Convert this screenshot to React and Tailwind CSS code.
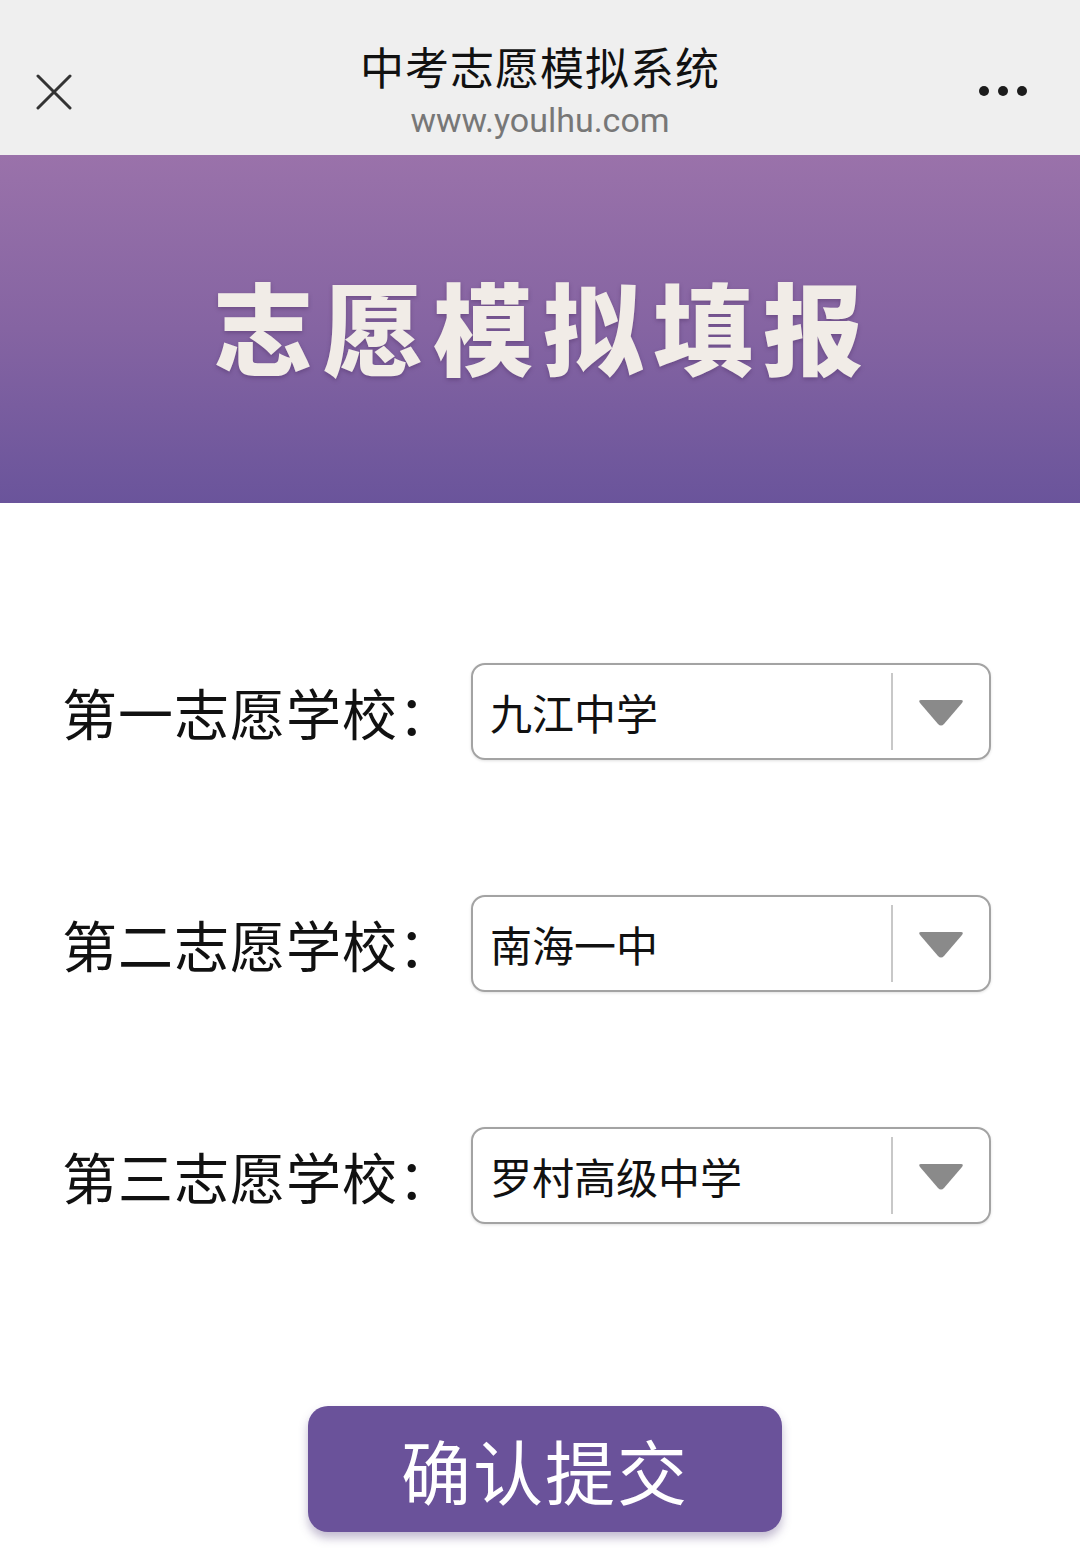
import React, { useState } from 'react';

const schools = ['九江中学', '南海一中', '罗村高级中学', '桂城中学', '石门中学', '西樵高级中学'];
const ranks = ['一', '二', '三'];

export default function App() {
    const [picks, setPicks] = useState(['九江中学', '南海一中', '罗村高级中学']);

    return (
        <div className="w-[1080px] min-h-[1561px] bg-white font-['Noto_Sans_CJK_SC',sans-serif]">
            {/* Nav bar */}
            <header className="h-[155px] bg-[#efefef] grid grid-cols-[1fr_auto_1fr] items-center">
                <div className="pl-9 pt-[28px]">
                    <svg viewBox="0 0 36 36" className="w-9 h-9" fill="none" stroke="#333" strokeWidth="3" strokeLinecap="round">
                        <path d="M2 2 L34 34 M34 2 L2 34" />
                    </svg>
                </div>
                <div className="flex flex-col items-center pt-[22px]">
                    <h1 className="text-[44px] leading-[56px] text-[#111] tracking-[1px]">中考志愿模拟系统</h1>
                    <p className="text-[34px] leading-[40px] text-[#777] font-['Roboto',sans-serif] mt-[6px]">www.youlhu.com</p>
                </div>
                <div className="flex gap-[9px] justify-end pr-[53px] pt-[27px]">
                    <span className="w-[10px] h-[10px] rounded-full bg-[#1c1c1c]" />
                    <span className="w-[10px] h-[10px] rounded-full bg-[#1c1c1c]" />
                    <span className="w-[10px] h-[10px] rounded-full bg-[#1c1c1c]" />
                </div>
            </header>

            {/* Banner */}
            <div className="h-[348px] bg-gradient-to-b from-[#9a72aa] via-[#8564a2] to-[#6a549b] flex items-center justify-center">
                <h2 className="text-[100px] font-black text-[#f1ece7] tracking-[10px] pl-[6px] pb-[8px] leading-none drop-shadow-[0_2px_2px_rgba(60,30,80,0.35)]">
                    志愿模拟填报
                </h2>
            </div>

            {/* Form */}
            <main className="pt-[160px] pl-[62px] flex flex-col gap-[135px]">
                {ranks.map((r, i) => (
                    <div key={r} className="flex items-center h-[97px]">
                        <label className="w-[409px] text-[55px] text-[#111] leading-none tracking-[1px]">
                            第{r}志愿学校：
                        </label>
                        <div className="relative w-[520px] h-[97px] border-2 border-[#a3a3a3] rounded-[14px] bg-white flex items-center shadow-[0_1px_3px_rgba(0,0,0,0.12)]">
                            <select
                                value={picks[i]}
                                onChange={e => {
                                    const next = [...picks];
                                    next[i] = e.target.value;
                                    setPicks(next);
                                }}
                                className="appearance-none w-full h-full bg-transparent pl-[17px] pr-[110px] text-[42px] text-[#111] outline-none"
                            >
                                {schools.map(s => <option key={s} value={s}>{s}</option>)}
                            </select>
                            <div className="pointer-events-none absolute right-0 top-[8px] bottom-[8px] w-[98px] border-l-2 border-[#c8c8c8] flex items-center justify-center">
                                <svg viewBox="0 0 48 30" className="w-12 h-[30px]">
                                    <path d="M4 3 H44 Q47 3 45 6 L27 27 Q24 30 21 27 L3 6 Q1 3 4 3 Z" fill="#8a8a8a" />
                                </svg>
                            </div>
                        </div>
                    </div>
                ))}
            </main>

            <div className="flex justify-center pt-[182px] pl-[10px]">
                <button className="w-[474px] h-[126px] rounded-[20px] bg-[#6a529a] text-white text-[70px] tracking-[2px] shadow-[0_6px_10px_rgba(80,60,120,0.35)]">
                    确认提交
                </button>
            </div>
        </div>
    );
}
